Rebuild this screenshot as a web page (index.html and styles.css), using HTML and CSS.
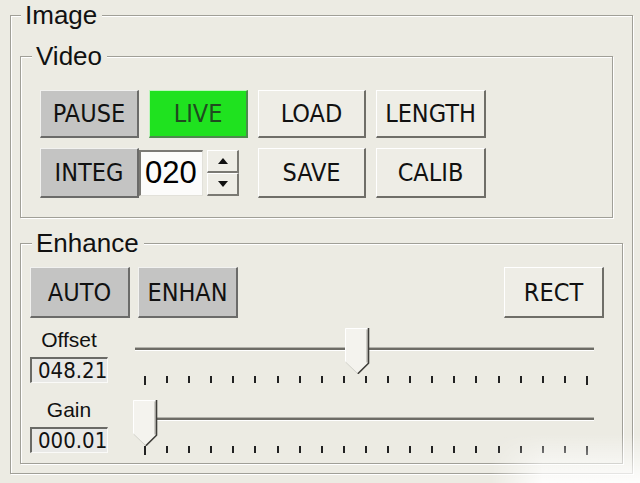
FILE: index.html
```html
<!DOCTYPE html>
<html lang="en">
<head>
    <meta charset="UTF-8">
    <title>Image</title>
    <link rel="stylesheet" href="styles.css">
</head>
<body>
    <fieldset class="group group-image">
        <legend>Image</legend>

        <fieldset class="group group-video">
            <legend>Video</legend>
            <div class="video-body">
                <div class="btn-row">
                    <button class="btn btn-gray btn-sm">PAUSE</button>
                    <button class="btn btn-live btn-sm">LIVE</button>
                    <button class="btn btn-md">LOAD</button>
                    <button class="btn btn-lg">LENGTH</button>
                </div>
                <div class="btn-row btn-row-second">
                    <button class="btn btn-gray btn-sm btn-tall">INTEG</button>
                    <div class="num-field">020</div>
                    <div class="spinner">
                        <span class="spin-btn"><i class="arrow-up"></i></span>
                        <span class="spin-btn"><i class="arrow-down"></i></span>
                    </div>
                    <button class="btn btn-md btn-tall btn-save">SAVE</button>
                    <button class="btn btn-lg btn-tall">CALIB</button>
                </div>
            </div>
        </fieldset>

        <fieldset class="group group-enhance">
            <legend>Enhance</legend>
            <div class="enhance-body">
                <div class="btn-row btn-row-enhance">
                    <button class="btn btn-gray btn-enh">AUTO</button>
                    <button class="btn btn-gray btn-enh">ENHAN</button>
                    <button class="btn btn-enh btn-rect">RECT</button>
                </div>

                <div class="slider-row">
                    <div class="readout">
                        <div class="readout-label">Offset</div>
                        <div class="readout-value">048.21</div>
                    </div>
                    <div class="slider">
                        <div class="slider-rail">
                            <div class="slider-track"></div>
                            <svg class="slider-thumb" style="left: 212px" width="25" height="46" viewBox="0 0 25 46">
                                <polygon points="0,0 24,0 24,35 13,45 0,34" fill="#f4f3ee"/>
                                <polyline points="0.5,34 0.5,0.5 23,0.5" fill="none" stroke="#ffffff"/>
                                <polyline points="22,1.5 22,34.5" fill="none" stroke="#a6a59e"/>
                                <polyline points="23.5,0 23.5,35.2 12.8,45.8" fill="none" stroke="#3f3e3a" stroke-width="1.6"/>
                                <polyline points="0.5,34 12,45" fill="none" stroke="#d2d1ca"/>
                            </svg>
                        </div>
                        <div class="slider-ticks">
                            <i></i><i></i><i></i><i></i><i></i><i></i><i></i><i></i><i></i><i></i><i></i>
                            <i></i><i></i><i></i><i></i><i></i><i></i><i></i><i></i><i></i><i></i>
                        </div>
                    </div>
                </div>

                <div class="slider-row slider-row-gain">
                    <div class="readout">
                        <div class="readout-label">Gain</div>
                        <div class="readout-value">000.01</div>
                    </div>
                    <div class="slider">
                        <div class="slider-rail">
                            <div class="slider-track"></div>
                            <svg class="slider-thumb" style="left: 0px; top: 2px" width="25" height="46" viewBox="0 0 25 46">
                                <polygon points="0,0 24,0 24,35 13,45 0,34" fill="#f4f3ee"/>
                                <polyline points="0.5,34 0.5,0.5 23,0.5" fill="none" stroke="#ffffff"/>
                                <polyline points="22,1.5 22,34.5" fill="none" stroke="#a6a59e"/>
                                <polyline points="23.5,0 23.5,35.2 12.8,45.8" fill="none" stroke="#3f3e3a" stroke-width="1.6"/>
                                <polyline points="0.5,34 12,45" fill="none" stroke="#d2d1ca"/>
                            </svg>
                        </div>
                        <div class="slider-ticks">
                            <i></i><i></i><i></i><i></i><i></i><i></i><i></i><i></i><i></i><i></i><i></i>
                            <i></i><i></i><i></i><i></i><i></i><i></i><i></i><i></i><i></i><i></i>
                        </div>
                    </div>
                </div>
            </div>
        </fieldset>
    </fieldset>

    <div class="fade"></div>
</body>
</html>
```

FILE: styles.css
```css
body {
    margin: 0;
    width: 640px;
    height: 483px;
    overflow: hidden;
    position: relative;
    background: #ecebe3;
    font-family: "Liberation Sans", Arial, sans-serif;
    color: #111;
}

/* etched group boxes */
.group {
    box-sizing: border-box;
    min-width: 0;
    margin: 0;
    padding: 0;
    border: 1px solid #a09f97;
    box-shadow: inset 1px 1px 0 #fff, 1px 1px 0 #fff;
}

.group legend {
    padding: 0 5px 0 4px;
    margin-left: 11px;
    font-size: 26px;
    line-height: 30px;
    background: #ecebe3;
}

.group-image {
    margin-left: 10px;
    width: 623px;
    padding-bottom: 9px;
}

.group-image > legend {
    margin-left: 10px;
}

.group-video {
    margin: 11px 0 0 9px;
    width: 593px;
}

.group-enhance {
    margin: 10px 0 0 9px;
    width: 603px;
}

.video-body {
    padding: 19px 0 19px 19px;
}

.enhance-body {
    padding: 9px 18px 8px 9px;
}

/* buttons */
.btn-row {
    display: flex;
    align-items: center;
    gap: 10px;
}

.btn-row-second {
    gap: 0;
    margin-top: 10px;
}

.btn {
    box-sizing: border-box;
    height: 48px;
    padding: 0;
    font-family: "Liberation Sans Narrow", "DejaVu Sans Condensed", "Liberation Sans", sans-serif;
    font-size: 25px;
    color: #111;
    background: #eeede6;
    border-style: solid;
    border-width: 1px 2px 2px 1px;
    border-color: #ffffff #6f6e68 #6f6e68 #ffffff;
    border-radius: 0;
}

.btn-gray {
    background: #c4c4c3;
    border-color: #f2f2f0 #6b6b69 #6b6b69 #f2f2f0;
}

.btn-live {
    background: #1fe21f;
    color: #1f4a1f;
    border-color: #bdf5bd #4d8a4d #4d8a4d #bdf5bd;
}

.btn-sm { width: 99px; }
.btn-md { width: 108px; }
.btn-lg { width: 110px; }
.btn-enh { width: 100px; height: 51px; }
.btn-tall { height: 50px; }

.btn-save {
    margin-left: 19px;
    margin-right: 10px;
}

.btn-row-enhance {
    gap: 8px;
}

.btn-rect {
    margin-left: auto;
}

/* spin box */
.num-field {
    box-sizing: border-box;
    width: 64px;
    height: 46px;
    padding-left: 4px;
    background: #fcfcfb;
    border-style: solid;
    border-width: 2px 1px 1px 2px;
    border-color: #7b7a75 #e2e1da #e2e1da #7b7a75;
    font-size: 31px;
    line-height: 42px;
    color: #000;
}

.spinner {
    display: flex;
    flex-direction: column;
    margin-left: 4px;
}

.spin-btn {
    box-sizing: border-box;
    width: 32px;
    height: 23px;
    display: flex;
    align-items: center;
    justify-content: center;
    background: #eeede6;
    border-style: solid;
    border-width: 1px 2px 2px 1px;
    border-color: #ffffff #7a7973 #7a7973 #ffffff;
}

.arrow-up,
.arrow-down {
    width: 0;
    height: 0;
    border-left: 5px solid transparent;
    border-right: 5px solid transparent;
}

.arrow-up { border-bottom: 6px solid #111; }
.arrow-down { border-top: 6px solid #111; }

/* sliders */
.slider-row {
    display: flex;
    align-items: flex-start;
    margin-top: 10px;
}

.slider-row-gain {
    margin-top: 13px;
}

.readout {
    width: 78px;
    display: flex;
    flex-direction: column;
    align-items: center;
}

.readout-label {
    font-size: 21px;
    line-height: 24px;
}

.readout-value {
    box-sizing: border-box;
    width: 78px;
    height: 26px;
    margin-top: 5px;
    padding-left: 6px;
    background: #e9e9e7;
    border-style: solid;
    border-width: 2px 1px 1px 2px;
    border-color: #6a6a66 #fafaf8 #fafaf8 #6a6a66;
    font-family: "Liberation Sans Narrow", "DejaVu Sans Condensed", "Liberation Sans", sans-serif;
    font-size: 22px;
    line-height: 23px;
    color: #111;
}

.slider {
    width: 467px;
    margin-left: 25px;
}

.slider-rail {
    position: relative;
    height: 48px;
}

.slider-track {
    position: relative;
    top: 20px;
    margin: 0 6px 0 2px;
    height: 2px;
    background: #6d6c66;
    box-shadow: 0 -1px 0 #b3b2ab, 0 1px 0 #ffffff;
}

.slider-thumb {
    position: absolute;
    top: 0;
    display: block;
}

.slider-ticks {
    display: flex;
    justify-content: space-between;
    align-items: flex-start;
    width: 444px;
    margin-left: 11px;
    height: 9px;
}

.slider-ticks i {
    width: 2px;
    height: 7px;
    background: #222;
}

.slider-ticks i:first-child,
.slider-ticks i:last-child {
    height: 9px;
}

/* washed-out corner of the capture */
.fade {
    position: absolute;
    right: 0;
    bottom: 0;
    width: 150px;
    height: 50px;
    background: linear-gradient(to bottom, rgba(255, 255, 255, 0), rgba(255, 255, 255, 0.9));
    -webkit-mask-image: linear-gradient(to right, transparent, #000 35%);
    mask-image: linear-gradient(to right, transparent, #000 35%);
}
```
